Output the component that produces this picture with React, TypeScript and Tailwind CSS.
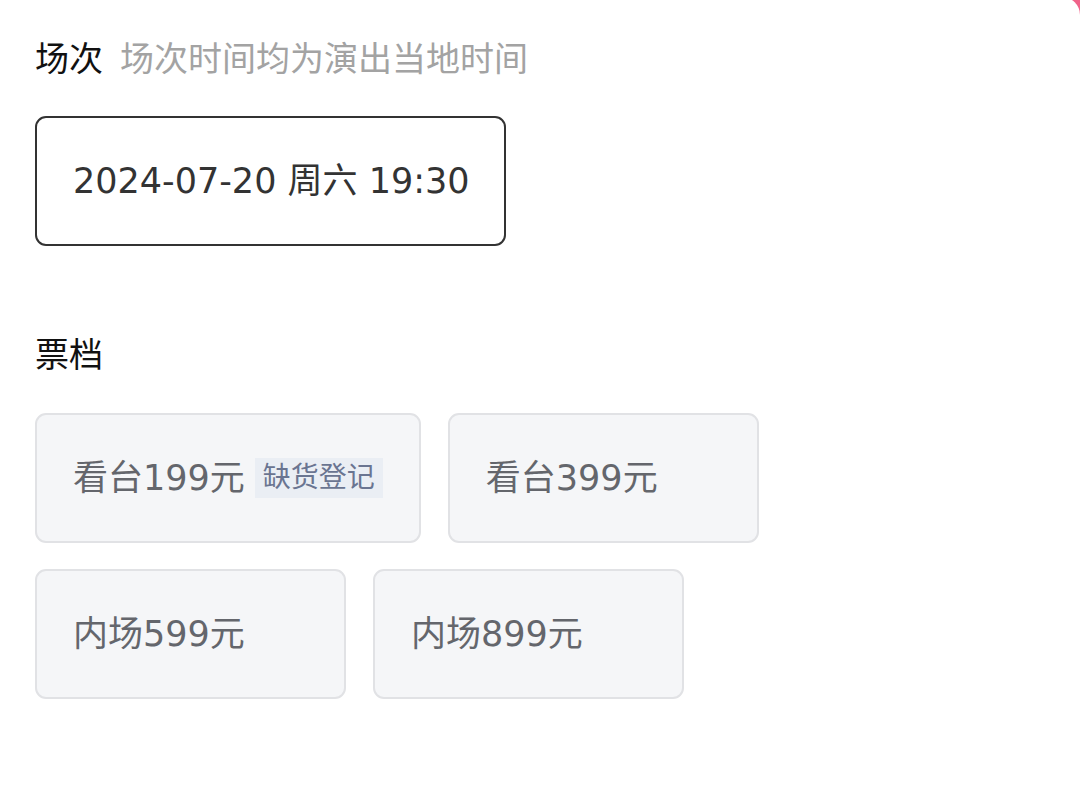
const tickets = [
  { name: "看台199元", badge: "缺货登记" },
  { name: "看台399元" },
  { name: "内场599元" },
  { name: "内场899元" },
];

const font = { fontFamily: '"DejaVu Sans", "Noto Sans CJK SC", sans-serif' };

export default function App() {
  return (
    <div className="w-[1080px] h-[792px] overflow-hidden bg-[#f0638a]" style={font}>
      <div className="mt-[-3px] h-[800px] bg-white rounded-tr-[18px] px-[35px] pt-[38px]">
        {/* 场次 */}
        <div className="flex items-center h-[48px] text-[34px]">
          <span className="text-[#111]">场次</span>
          <span className="ml-[17px] text-[#a3a3a3]">场次时间均为演出当地时间</span>
        </div>

        <div className="mt-[33px] inline-flex items-center whitespace-nowrap h-[130px] w-[471px] pl-[36px] pr-[20px] border-2 border-[#333] rounded-[11px] text-[35px] text-[#333]">
          2024-07-20 周六 19:30
        </div>

        {/* 票档 */}
        <div className="mt-[85px] flex items-center h-[48px] text-[34px] text-[#111]">票档</div>

        <div className="mt-[34px] flex flex-wrap gap-x-[27px] gap-y-[26px]">
          {tickets.map((t) => (
            <div
              key={t.name}
              className="flex items-center whitespace-nowrap h-[130px] min-w-[311px] pl-[36px] pr-[36px] bg-[#f5f6f8] border-2 border-[#e1e2e5] rounded-[11px]"
            >
              <span className="text-[35px] text-[#64666c]">{t.name}</span>
              {t.badge && (
                <span className="ml-[10px] px-[8px] h-[40px] flex items-center bg-[#eaeef4] text-[28px] text-[#6a7591]">
                  {t.badge}
                </span>
              )}
            </div>
          ))}
        </div>
      </div>
    </div>
  );
}
